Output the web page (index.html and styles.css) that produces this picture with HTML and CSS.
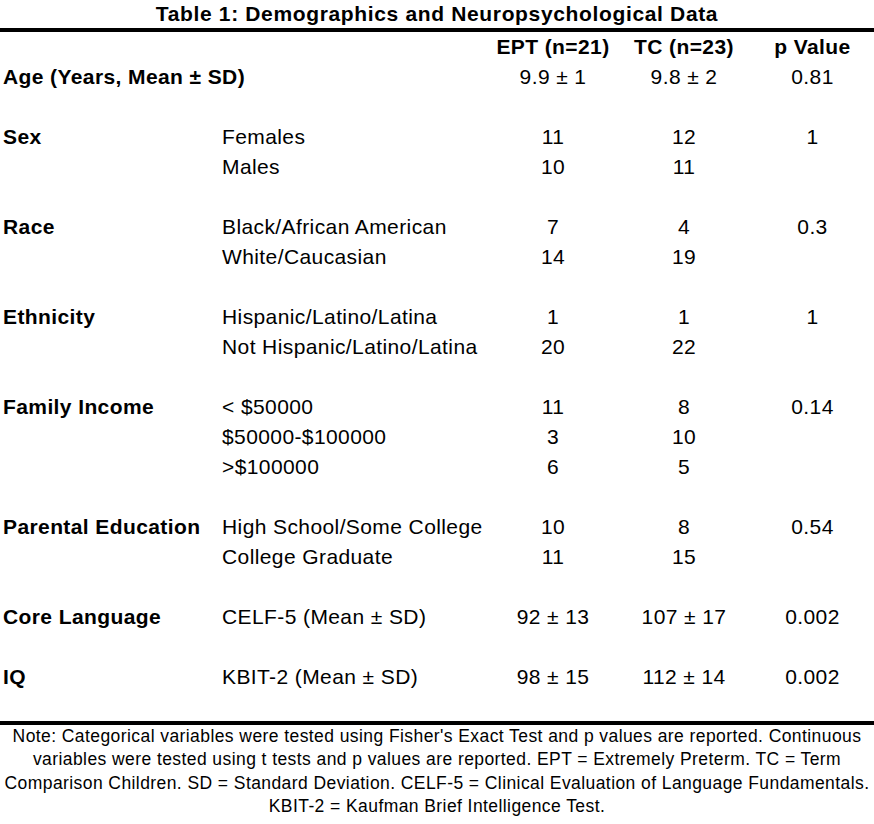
FILE: index.html
```html
<!DOCTYPE html>
<html>
<head>
<meta charset="utf-8">
<link rel="stylesheet" href="styles.css">
</head>
<body>
<div class="page">
  <div class="title">Table 1: Demographics and Neuropsychological Data</div>
  <div class="rule"></div>
  <table class="data">
    <colgroup>
      <col class="c1"><col class="c2"><col class="c3"><col class="c4"><col class="c5">
    </colgroup>
    <tr class="head"><td></td><td></td><td class="num">EPT (n=21)</td><td class="num">TC (n=23)</td><td class="num">p Value</td></tr>
    <tr><td class="lab" colspan="2">Age (Years, Mean ± SD)</td><td class="num">9.9 ± 1</td><td class="num">9.8 ± 2</td><td class="num">0.81</td></tr>
    <tr class="gap"><td colspan="5"></td></tr>
    <tr><td class="lab">Sex</td><td>Females</td><td class="num">11</td><td class="num">12</td><td class="num">1</td></tr>
    <tr><td></td><td>Males</td><td class="num">10</td><td class="num">11</td><td></td></tr>
    <tr class="gap"><td colspan="5"></td></tr>
    <tr><td class="lab">Race</td><td>Black/African American</td><td class="num">7</td><td class="num">4</td><td class="num">0.3</td></tr>
    <tr><td></td><td>White/Caucasian</td><td class="num">14</td><td class="num">19</td><td></td></tr>
    <tr class="gap"><td colspan="5"></td></tr>
    <tr><td class="lab">Ethnicity</td><td>Hispanic/Latino/Latina</td><td class="num">1</td><td class="num">1</td><td class="num">1</td></tr>
    <tr><td></td><td>Not Hispanic/Latino/Latina</td><td class="num">20</td><td class="num">22</td><td></td></tr>
    <tr class="gap"><td colspan="5"></td></tr>
    <tr><td class="lab">Family Income</td><td>&lt; $50000</td><td class="num">11</td><td class="num">8</td><td class="num">0.14</td></tr>
    <tr><td></td><td>$50000-$100000</td><td class="num">3</td><td class="num">10</td><td></td></tr>
    <tr><td></td><td>&gt;$100000</td><td class="num">6</td><td class="num">5</td><td></td></tr>
    <tr class="gap"><td colspan="5"></td></tr>
    <tr><td class="lab">Parental Education</td><td>High School/Some College</td><td class="num">10</td><td class="num">8</td><td class="num">0.54</td></tr>
    <tr><td></td><td>College Graduate</td><td class="num">11</td><td class="num">15</td><td></td></tr>
    <tr class="gap"><td colspan="5"></td></tr>
    <tr><td class="lab">Core Language</td><td>CELF-5 (Mean ± SD)</td><td class="num">92 ± 13</td><td class="num">107 ± 17</td><td class="num">0.002</td></tr>
    <tr class="gap"><td colspan="5"></td></tr>
    <tr><td class="lab">IQ</td><td>KBIT-2 (Mean ± SD)</td><td class="num">98 ± 15</td><td class="num">112 ± 14</td><td class="num">0.002</td></tr>
  </table>
  <div class="rule bottom"></div>
  <p class="note">Note: Categorical variables were tested using Fisher's Exact Test and p values are reported. Continuous variables were tested using t tests and p values are reported. EPT = Extremely Preterm. TC = Term Comparison Children. SD = Standard Deviation. CELF-5 = Clinical Evaluation of Language Fundamentals. KBIT-2 = Kaufman Brief Intelligence Test.</p>
</div>
</body>
</html>
```

FILE: styles.css
```css
html, body {
  margin: 0;
  padding: 0;
  background: #ffffff;
}
body {
  font-family: "Liberation Sans", Arial, sans-serif;
  color: #000000;
  width: 874px;
}
.page {
  display: flex;
  flex-direction: column;
}
.title {
  font-weight: bold;
  font-size: 21px;
  letter-spacing: 0.65px;
  line-height: 28px;
  text-align: center;
  height: 28px;
}
.rule {
  height: 4px;
  background: #000000;
}
.data {
  border-collapse: collapse;
  table-layout: fixed;
  width: 874px;
  font-size: 21px;
  letter-spacing: 0.4px;
  margin-top: 0;
}
.data td {
  padding: 0;
  height: 30px;
  line-height: 30px;
  white-space: nowrap;
  vertical-align: middle;
}
.c1 { width: 222px; }
.c2 { width: 267px; }
.c3 { width: 128px; }
.c4 { width: 134px; }
.c5 { width: 123px; }
.data td.lab {
  font-weight: bold;
  padding-left: 3px;
}
.data td.num {
  text-align: center;
}
.head td {
  font-weight: bold;
}
.bottom {
  margin-top: 29px;
}
.note {
  margin: 0;
  padding: 0;
  font-size: 17.5px;
  letter-spacing: 0.42px;
  line-height: 23.3px;
  text-align: center;
}
```
